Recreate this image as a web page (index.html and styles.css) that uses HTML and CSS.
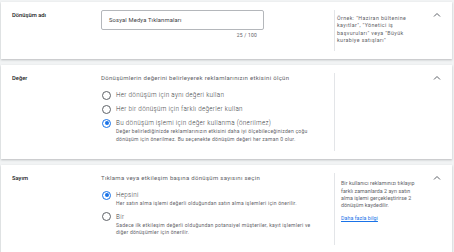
FILE: index.html
```html
<!DOCTYPE html>
<html lang="tr">
  <head>
    <meta charset="UTF-8" />
    <meta name="viewport" content="width=device-width, initial-scale=1.0" />
    <title>Dönüşüm işlemi</title>
    <link rel="stylesheet" href="styles.css">
  </head>
  <body>
    <div class="page">
      <!-- Dönüşüm adı -->
      <div class="card">
        <div class="card-title">Dönüşüm adı</div>
        <div class="card-main">
          <div class="field">
            <div class="field-input">Sosyal Medya Tıklanmaları</div>
            <div class="field-count">25 / 100</div>
          </div>
        </div>
        <div class="card-help help-name">
          Örnek: "Haziran bültenine kayıtlar", "Yönetici iş başvuruları" veya "Büyük kurabiye satışları"
        </div>
        <div class="card-toggle">
          <svg width="8" height="5" viewBox="0 0 8 5"><polyline points="1,4.5 4,1.5 7,4.5" fill="none" stroke="#5f6368" stroke-width="1"/></svg>
        </div>
      </div>

      <!-- Değer -->
      <div class="card">
        <div class="card-title">Değer</div>
        <div class="card-main">
          <div class="desc">Dönüşümlerin değerini belirleyerek reklamlarınızın etkisini ölçün</div>
          <div class="options">
            <div class="option">
              <span class="radio"></span>
              <div class="option-text">
                <div class="option-label">Her dönüşüm için aynı değeri kullan</div>
              </div>
            </div>
            <div class="option">
              <span class="radio"></span>
              <div class="option-text">
                <div class="option-label">Her bir dönüşüm için farklı değerler kullan</div>
              </div>
            </div>
            <div class="option">
              <span class="radio checked"></span>
              <div class="option-text">
                <div class="option-label">Bu dönüşüm işlemi için değer kullanma (önerilmez)</div>
                <div class="option-sub">Değer belirlediğinizde reklamlarınızın etkisini daha iyi ölçebileceğinizden çoğu dönüşüm için önerilmez. Bu seçenekte dönüşüm değeri her zaman 0 olur.</div>
              </div>
            </div>
          </div>
        </div>
        <div class="card-help"></div>
        <div class="card-toggle">
          <svg width="8" height="5" viewBox="0 0 8 5"><polyline points="1,4.5 4,1.5 7,4.5" fill="none" stroke="#5f6368" stroke-width="1"/></svg>
        </div>
      </div>

      <!-- Sayım -->
      <div class="card">
        <div class="card-title">Sayım</div>
        <div class="card-main">
          <div class="desc">Tıklama veya etkileşim başına dönüşüm sayısını seçin</div>
          <div class="options">
            <div class="option">
              <span class="radio checked"></span>
              <div class="option-text">
                <div class="option-label">Hepsini</div>
                <div class="option-sub">Her satın alma işlemi değerli olduğundan satın alma işlemleri için önerilir.</div>
              </div>
            </div>
            <div class="option">
              <span class="radio"></span>
              <div class="option-text">
                <div class="option-label">Bir</div>
                <div class="option-sub">Sadece ilk etkileşim değerli olduğundan potansiyel müşteriler, kayıt işlemleri ve diğer dönüşümler için önerilir.</div>
              </div>
            </div>
          </div>
        </div>
        <div class="card-help help-count">
          <div>Bir kullanıcı reklamınızı tıklayıp farklı zamanlarda 2 ayrı satın alma işlemi gerçekleştirirse 2 dönüşüm kaydedilir.</div>
          <a class="help-link" href="#">Daha fazla bilgi</a>
        </div>
        <div class="card-toggle">
          <svg width="8" height="5" viewBox="0 0 8 5"><polyline points="1,4.5 4,1.5 7,4.5" fill="none" stroke="#5f6368" stroke-width="1"/></svg>
        </div>
      </div>
    </div>
  </body>
</html>
```

FILE: styles.css
```css
body {
  margin: 0;
  font-family: Roboto, "Liberation Sans", Arial, sans-serif;
  background: #f1f3f4;
  color: #3c4043;
}
.page {
  padding: 2px 2px 0 1px;
}
.card {
  display: flex;
  padding: 8px 0;
  margin-bottom: 6px;
  background: #fff;
  box-shadow: 0 1px 2px rgba(60, 64, 67, 0.3);
}
.card-title {
  width: 89px;
  padding-left: 11px;
  font-size: 5.8px;
  line-height: 10px;
  font-weight: 500;
  color: #202124;
}
.card-main {
  width: 219px;
  padding-right: 14px;
  padding-bottom: 6px;
}
.card-help {
  width: 80px;
  padding-left: 6px;
  border-left: 1px solid #e3e5e8;
  font-size: 5.3px;
  line-height: 7.4px;
  color: #5f6368;
}
.help-name {
  width: 84px;
  padding-left: 2px;
  padding-top: 5px;
  padding-bottom: 6.5px;
  letter-spacing: 0.4px;
}
.help-count {
  padding-top: 7px;
  letter-spacing: 0.05px;
}
.help-link {
  display: inline-block;
  margin-top: 5px;
  color: #1a73e8;
}
.card-toggle {
  flex: 1;
  display: flex;
  justify-content: center;
  padding-top: 2px;
  padding-left: 1px;
}
.field {
  width: 163px;
}
.field-input {
  height: 18px;
  line-height: 18px;
  padding-left: 7px;
  border: 1px solid #b4b7bb;
  border-radius: 2px;
  font-size: 5.8px;
  letter-spacing: 0.15px;
  color: #3c4043;
}
.field-count {
  padding-right: 7px;
  margin-top: 1px;
  text-align: right;
  font-size: 5px;
  line-height: 8px;
  letter-spacing: 0.2px;
  color: #5f6368;
}
.desc {
  font-size: 6px;
  line-height: 10px;
  letter-spacing: 0.3px;
  color: #5f6368;
}
.options {
  margin-top: 5px;
}
.option {
  display: flex;
  gap: 5px;
  padding: 2px 0;
}
.radio {
  flex: none;
  box-sizing: border-box;
  width: 9px;
  height: 9px;
  margin: 0.5px 0 0 1px;
  border: 1px solid #5f6368;
  border-radius: 50%;
  position: relative;
}
.radio.checked {
  border-color: #1a73e8;
}
.radio.checked::after {
  content: "";
  position: absolute;
  left: 1.5px;
  top: 1.5px;
  width: 4px;
  height: 4px;
  border-radius: 50%;
  background: #1a73e8;
}
.option-label {
  font-size: 6.3px;
  line-height: 10px;
  font-weight: 300;
  letter-spacing: 0.3px;
  color: #3c4043;
}
.option-sub {
  font-size: 5px;
  line-height: 7.5px;
  letter-spacing: 0.25px;
  color: #5f6368;
}
```
